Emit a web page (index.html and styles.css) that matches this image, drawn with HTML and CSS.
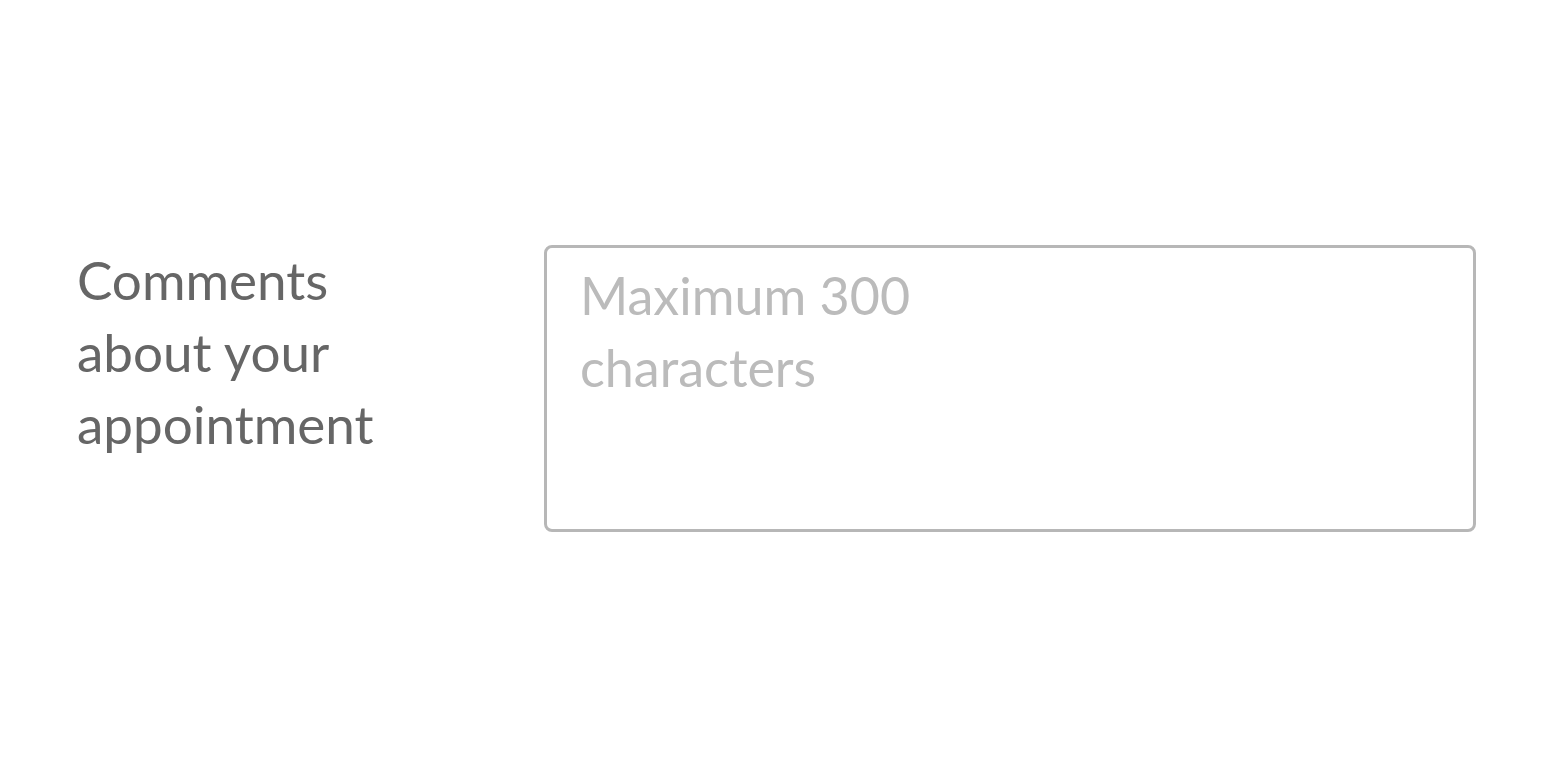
FILE: index.html
```html
<!DOCTYPE html>
<html lang="en">
<head>
    <meta charset="UTF-8">
    <meta name="viewport" content="width=device-width, initial-scale=1.0">
    <title>Appointment comments</title>
    <link rel="stylesheet" href="styles.css">
</head>
<body>
    <div class="page">
        <div class="form-row">
            <label for="comments" class="field-label">Comments about your appointment</label>
            <textarea id="comments" class="field-input" placeholder="Maximum 300&#10;characters"></textarea>
        </div>
    </div>
</body>
</html>
```

FILE: styles.css
```css
body {
    margin: 0;
    background: #fff;
    font-family: Lato, "Open Sans", sans-serif;
}
.page {
    height: 100vh;
    display: flex;
    align-items: center;
    padding-left: 77px;
}
.form-row {
    display: flex;
    align-items: flex-start;
}
.field-label {
    width: 330px;
    margin-right: 137px;
    margin-top: -1px;
    font-size: 53px;
    line-height: 72px;
    color: #666;
}
.field-input {
    width: 932px;
    height: 287px;
    box-sizing: border-box;
    padding: 11px 33px 10px;
    border: 3px solid #b7b7b7;
    border-radius: 8px;
    font-family: inherit;
    font-size: 52px;
    line-height: 72px;
    color: #444;
    resize: none;
    outline: none;
}
.field-input::placeholder {
    color: #bbb;
}
```
